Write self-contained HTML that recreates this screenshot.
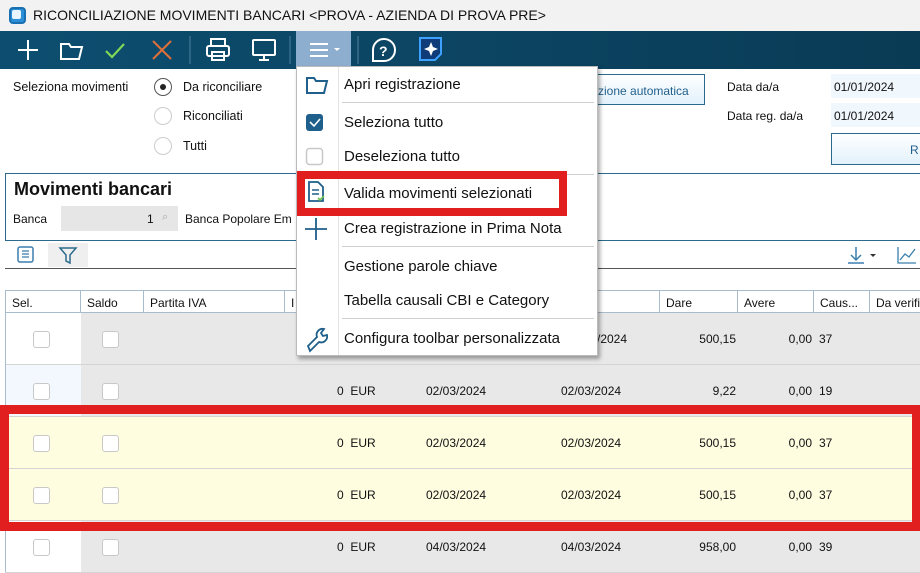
<!DOCTYPE html>
<html><head><meta charset="utf-8"><style>
*{margin:0;padding:0;box-sizing:border-box}
body{width:920px;height:572px;overflow:hidden;position:relative;background:#fff;font-family:"Liberation Sans",sans-serif;font-size:12px;color:#111}
.a{position:absolute;white-space:nowrap}
.cb{position:absolute;width:17px;height:17px;border:1.5px solid #c8c8c8;border-radius:3px;background:#fff}
.row{position:absolute;left:5px;width:915px;height:52px;background:#e8e8e8;border-bottom:1px solid #d4d4d4}
.row .s{position:absolute;left:0;top:0;width:76px;height:100%;background:#fff}
.hd{position:absolute;top:290px;height:23px;border-right:1px solid #a9bccc;border-top:1px solid #a9bccc;border-bottom:1px solid #a9bccc;padding:5px 6px;font-size:12px;overflow:hidden;white-space:nowrap}
.mi{position:absolute;left:344px;font-size:15px;color:#111}
.sep{position:absolute;left:342px;width:252px;height:1px;background:#cfcfcf}
</style></head><body>
<div class="a" style="left:0;top:0;width:920px;height:31px;background:#f2f2f2"></div>
<div class="a" style="left:9px;top:7px;width:17px;height:17px;border-radius:4px;background:#2a8fd6;border:2px solid #1a6fb0"></div>
<div class="a" style="left:12px;top:10px;width:9px;height:9px;border-radius:2px;background:#e8f4ff"></div>
<div class="a" style="left:33px;top:7px;font-size:14px;color:#111">RICONCILIAZIONE MOVIMENTI BANCARI &lt;PROVA - AZIENDA DI PROVA PRE&gt;</div>
<div class="a" style="left:0;top:31px;width:920px;height:38px;background:linear-gradient(90deg,#0d4e70,#0a3b55)"></div>
<div class="a" style="left:296px;top:31px;width:55px;height:38px;background:#8eaed0"></div>
<svg class="a" style="left:0;top:31px" width="460" height="38">
<g stroke="#fff" stroke-width="2" fill="none">
<path d="M28 9v20M18 19h20"/>
<path d="M61 13h8l2 3h11l-3 12H61z"/>
</g>
<path d="M106 20l6 6 12-13" stroke="#7ed957" stroke-width="2.2" fill="none"/>
<path d="M153 10l18 18M171 10l-18 18" stroke="#e0703a" stroke-width="2" fill="none"/>
<line x1="190" y1="5" x2="190" y2="33" stroke="#3a6e8c" stroke-width="1.5"/>
<g stroke="#fff" stroke-width="2" fill="none">
<rect x="211" y="8" width="14" height="7"/><rect x="207" y="15" width="22" height="10" rx="2"/><rect x="212" y="21" width="12" height="8"/>
<rect x="253" y="9" width="22" height="15" rx="1"/><path d="M259 29h10M264 24v5"/>
</g>
<line x1="290" y1="5" x2="290" y2="33" stroke="#3a6e8c" stroke-width="1.5"/>
<g stroke="#fff" stroke-width="2"><path d="M310 13h18M310 19h18M310 25h18"/></g>
<path d="M334 17l3 3 3-3z" fill="#fff"/>
<line x1="358" y1="5" x2="358" y2="33" stroke="#3a6e8c" stroke-width="1.5"/>
<path d="M373 29v-10a11 11 0 1 1 11 11h-11z" stroke="#fff" stroke-width="2" fill="none"/>
<text x="379" y="25" fill="#fff" font-size="14" font-weight="bold" font-family="Liberation Sans">?</text>
<path d="M420 7h21v16l-6 6h-15z" fill="#0f3c78" stroke="#3ea0ff" stroke-width="2"/>
<path d="M431 11l2 5 5 2-5 2-2 5-2-5-5-2 5-2z" fill="#fff"/>
</svg>
<div class="a" style="left:13px;top:80px;font-size:12.5px">Seleziona movimenti</div>
<div class="a" style="left:154px;top:78px;width:18px;height:18px;border:1.5px solid #555;border-radius:50%"></div>
<div class="a" style="left:160px;top:84px;width:6px;height:6px;background:#222;border-radius:50%"></div>
<div class="a" style="left:154px;top:107px;width:18px;height:18px;border:1.5px solid #ccc;border-radius:50%"></div>
<div class="a" style="left:154px;top:137px;width:18px;height:18px;border:1.5px solid #ccc;border-radius:50%"></div>
<div class="a" style="left:183px;top:80px;font-size:12.5px">Da riconciliare</div>
<div class="a" style="left:183px;top:109px;font-size:12.5px">Riconciliati</div>
<div class="a" style="left:183px;top:139px;font-size:12.5px">Tutti</div>
<div class="a" style="left:560px;top:74px;width:145px;height:31px;border:1px solid #2b6a8c;background:linear-gradient(#fff,#e2f1fb)"></div>
<div class="a" style="left:598px;top:84px;color:#1f5f8b">zione automatica</div>
<div class="a" style="left:727px;top:80px">Data da/a</div>
<div class="a" style="left:727px;top:109px">Data reg. da/a</div>
<div class="a" style="left:831px;top:74px;width:89px;height:24px;background:#f0f7fd"></div>
<div class="a" style="left:831px;top:103px;width:89px;height:24px;background:#f0f7fd"></div>
<div class="a" style="left:834px;top:80px">01/01/2024</div>
<div class="a" style="left:834px;top:109px">01/01/2024</div>
<div class="a" style="left:831px;top:133px;width:92px;height:32px;border:1px solid #2b6a8c;background:linear-gradient(#fff,#e2f1fb)"></div>
<div class="a" style="left:910px;top:143px;color:#1f5f8b">R</div>
<div class="a" style="left:5px;top:173px;width:920px;height:68px;border:1px solid #2b6a8c;border-right:none"></div>
<div class="a" style="left:14px;top:179px;font-size:18px;font-weight:bold">Movimenti bancari</div>
<div class="a" style="left:13px;top:212px">Banca</div>
<div class="a" style="left:61px;top:206px;width:117px;height:25px;background:#e6e6e6"></div>
<div class="a" style="left:147px;top:212px">1</div>
<div class="a" style="left:162px;top:211px;color:#aaa;font-size:11px">⌕</div>
<div class="a" style="left:185px;top:212px">Banca Popolare Em</div>
<div class="a" style="left:48px;top:243px;width:40px;height:24px;background:#efefef"></div>
<svg class="a" style="left:15px;top:244px" width="80" height="22">
<rect x="3" y="3" width="15" height="15" rx="2" fill="none" stroke="#3a7fae" stroke-width="1.5"/>
<path d="M7 7h7M7 10h7M7 13h7" stroke="#3a7fae" stroke-width="1.2"/>
<path d="M45 4h16l-6 7v8l-4-2v-6z" fill="none" stroke="#2b6a8c" stroke-width="1.5"/>
</svg>
<div class="a" style="left:5px;top:268px;width:915px;height:1px;background:#555"></div>
<svg class="a" style="left:845px;top:244px" width="75" height="22">
<path d="M11 3v13M6 11l5 5 5-5M3 19h16" stroke="#3a7fae" stroke-width="1.5" fill="none"/>
<path d="M25 10l3 3 3-3z" fill="#333"/>
<path d="M53 3v16h18M55 16l5-6 4 3 6-8" stroke="#3a7fae" stroke-width="1.3" fill="none"/>
</svg>
<div class="hd" style="left:5px;width:76px;border-left:1px solid #a9bccc">Sel.</div>
<div class="hd" style="left:81px;width:63px">Saldo</div>
<div class="hd" style="left:144px;width:141px">Partita IVA</div>
<div class="hd" style="left:285px;width:201px">I</div>
<div class="hd" style="left:486px;width:174px">Data valuta</div>
<div class="hd" style="left:660px;width:78px">Dare</div>
<div class="hd" style="left:738px;width:76px">Avere</div>
<div class="hd" style="left:814px;width:56px">Caus...</div>
<div class="hd" style="left:870px;width:50px;border-right:none">Da verifi</div>
<div class="row" style="top:313px"><div class="s"></div></div>
<div class="row" style="top:365px"><div class="s" style="background:#f2f8fd"></div></div>
<div class="row" style="top:417px;background:#fefde0"><div class="s" style="background:#fefde0"></div></div>
<div class="row" style="top:469px;background:#fefde0"><div class="s" style="background:#fefde0"></div></div>
<div class="row" style="top:521px"><div class="s"></div></div>
<div class="a" style="left:5px;top:313px;width:1px;height:259px;background:#a9bccc"></div>
<div class="cb" style="left:33px;top:331px"></div><div class="cb" style="left:102px;top:331px"></div>
<div class="cb" style="left:33px;top:383px"></div><div class="cb" style="left:102px;top:383px"></div>
<div class="cb" style="left:33px;top:435px"></div><div class="cb" style="left:102px;top:435px"></div>
<div class="cb" style="left:33px;top:487px"></div><div class="cb" style="left:102px;top:487px"></div>
<div class="cb" style="left:33px;top:539px"></div><div class="cb" style="left:102px;top:539px"></div>
<div class="a" style="left:597px;top:332px">/2024</div><div class="a" style="left:660px;width:76px;text-align:right;top:332px">500,15</div><div class="a" style="left:738px;width:74px;text-align:right;top:332px">0,00</div><div class="a" style="left:819px;top:332px">37</div>
<div class="a" style="left:337px;top:384px">0&nbsp; EUR</div><div class="a" style="left:426px;top:384px">02/03/2024</div><div class="a" style="left:561px;top:384px">02/03/2024</div><div class="a" style="left:660px;width:76px;text-align:right;top:384px">9,22</div><div class="a" style="left:738px;width:74px;text-align:right;top:384px">0,00</div><div class="a" style="left:819px;top:384px">19</div>
<div class="a" style="left:337px;top:436px">0&nbsp; EUR</div><div class="a" style="left:426px;top:436px">02/03/2024</div><div class="a" style="left:561px;top:436px">02/03/2024</div><div class="a" style="left:660px;width:76px;text-align:right;top:436px">500,15</div><div class="a" style="left:738px;width:74px;text-align:right;top:436px">0,00</div><div class="a" style="left:819px;top:436px">37</div>
<div class="a" style="left:337px;top:488px">0&nbsp; EUR</div><div class="a" style="left:426px;top:488px">02/03/2024</div><div class="a" style="left:561px;top:488px">02/03/2024</div><div class="a" style="left:660px;width:76px;text-align:right;top:488px">500,15</div><div class="a" style="left:738px;width:74px;text-align:right;top:488px">0,00</div><div class="a" style="left:819px;top:488px">37</div>
<div class="a" style="left:337px;top:540px">0&nbsp; EUR</div><div class="a" style="left:426px;top:540px">04/03/2024</div><div class="a" style="left:561px;top:540px">04/03/2024</div><div class="a" style="left:660px;width:76px;text-align:right;top:540px">958,00</div><div class="a" style="left:738px;width:74px;text-align:right;top:540px">0,00</div><div class="a" style="left:819px;top:540px">39</div>
<div class="a" style="left:0;top:405px;width:920px;height:126px;border:9px solid #e21f1f;border-right-width:8px"></div>
<div class="a" style="left:296px;top:66px;width:302px;height:290px;background:#fff;border:1px solid #bbb;box-shadow:2px 3px 4px rgba(0,0,0,.35)"></div>
<div class="a" style="left:338px;top:67px;width:1px;height:288px;background:#e4e4e4"></div>
<div class="sep" style="top:102px"></div>
<div class="sep" style="top:174px"></div>
<div class="sep" style="top:246px"></div>
<div class="sep" style="top:318px"></div>
<svg class="a" style="left:296px;top:66px" width="46" height="290">
<path d="M11 12h7l2 3h11l-3 12H11z" fill="none" stroke="#1f5f8b" stroke-width="2"/>
<rect x="10" y="48" width="17" height="17" rx="3" fill="#1f5f8b"/><path d="M14 56l4 4 6-7" stroke="#fff" stroke-width="1.6" fill="none"/>
<rect x="10.5" y="82.5" width="16" height="16" rx="3" fill="#fff" stroke="#c8c8c8" stroke-width="1.5"/>
<path d="M13 116h9l5 5v14H13z" fill="none" stroke="#1f5f8b" stroke-width="1.8"/><path d="M16 124h7M16 128h7" stroke="#1f5f8b" stroke-width="1.4"/><path d="M22 132l2 2 4-4" stroke="#6cc04a" stroke-width="1.6" fill="none"/>
<path d="M20 152v22M9 163h22" stroke="#1f5f8b" stroke-width="1.8"/>
<path d="M12 280l9-9a6 6 0 0 1 7-8l-3 4 2 3 4-1a6 6 0 0 1-8 7l-9 9z" fill="none" stroke="#1f5f8b" stroke-width="1.8"/>
</svg>
<div class="mi" style="top:76px">Apri registrazione</div>
<div class="mi" style="top:114px">Seleziona tutto</div>
<div class="mi" style="top:148px">Deseleziona tutto</div>
<div class="mi" style="top:185px">Valida movimenti selezionati</div>
<div class="mi" style="top:220px">Crea registrazione in Prima Nota</div>
<div class="mi" style="top:258px">Gestione parole chiave</div>
<div class="mi" style="top:292px">Tabella causali CBI e Category</div>
<div class="mi" style="top:330px">Configura toolbar personalizzata</div>
<div class="a" style="left:297px;top:171px;width:270px;height:45px;border:8px solid #e21f1f"></div>
</body></html>
